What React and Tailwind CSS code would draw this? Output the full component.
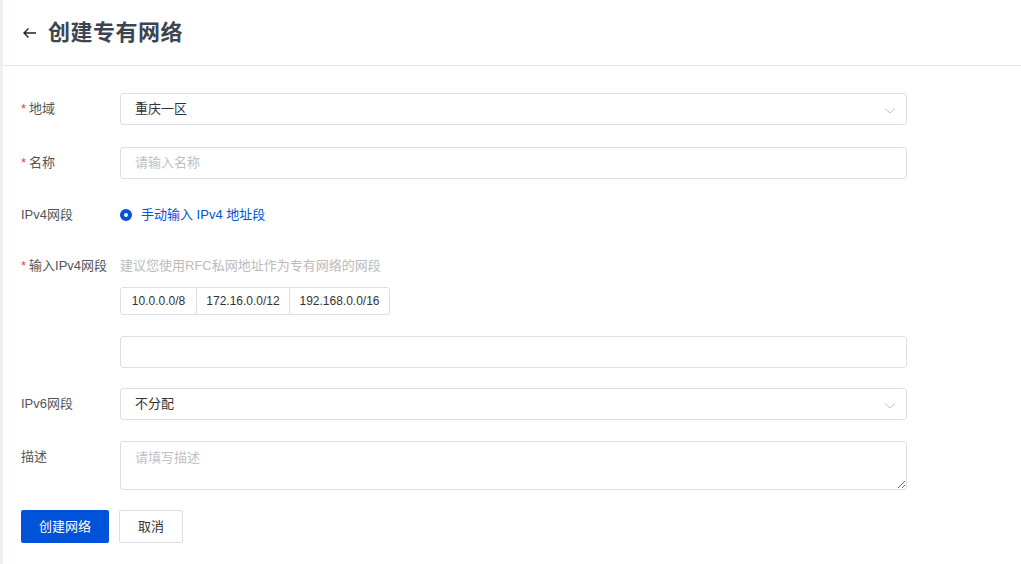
import React from 'react';

const font = { fontFamily: '"Liberation Sans", "Noto Sans CJK SC", sans-serif' };

function Label({ required, children }) {
  return (
    <div className="w-[99px] shrink-0 h-[32px] flex items-center text-[13px] text-[#555]">
      {required && <span className="text-[#e54545] mr-[3px]">*</span>}
      <span>{children}</span>
    </div>
  );
}

function Chevron() {
  return (
    <svg width="12" height="8" viewBox="0 0 12 8" className="absolute right-[10px] top-[13px]">
      <path d="M1 1.5 L6 6 L11 1.5" fill="none" stroke="#c0c4cc" strokeWidth="1" />
    </svg>
  );
}

export default function App() {
  return (
    <div className="flex w-[1021px] h-[564px] bg-white overflow-hidden" style={font}>
      <div className="w-[3px] shrink-0 bg-[#eef0f3]" />
      <div className="flex-1 flex flex-col">
        {/* Header */}
        <div className="h-[66px] shrink-0 border-b border-[#e6e6e6] flex items-center pl-[19px]">
          <svg width="16" height="14" viewBox="0 0 16 14" className="mr-[10px]">
            <path d="M2 7 H14 M6.5 2.5 L2 7 L6.5 11.5" fill="none" stroke="#222" strokeWidth="1.4" />
          </svg>
          <h1 className="text-[22px] font-bold text-[#3d4451] tracking-[0.5px]">创建专有网络</h1>
        </div>

        {/* Form */}
        <div className="pl-[18px] pt-[27px] flex flex-col">
          <div className="flex">
            <Label required>地域</Label>
            <div className="relative w-[787px] h-[32px] border border-[#dcdfe4] rounded-[3px] flex items-center pl-[14px] text-[13px] text-[#333]">
              重庆一区
              <Chevron />
            </div>
          </div>

          <div className="flex mt-[22px]">
            <Label required>名称</Label>
            <div className="w-[787px] h-[32px] border border-[#dcdfe4] rounded-[3px] flex items-center pl-[14px] text-[13px] text-[#bfbfbf]">
              请输入名称
            </div>
          </div>

          <div className="flex mt-[20px]">
            <Label>IPv4网段</Label>
            <div className="h-[32px] flex items-center">
              <span className="w-[12px] h-[12px] rounded-full border-[4px] border-[#0052d9] bg-white mr-[9px]" />
              <span className="text-[13px] text-[#0052d9]">手动输入 IPv4 地址段</span>
            </div>
          </div>

          <div className="flex mt-[19px]">
            <Label required>输入IPv4网段</Label>
            <div className="flex flex-col">
              <div className="h-[32px] flex items-center text-[13px] text-[#bbbbbb]">
                建议您使用RFC私网地址作为专有网络的网段
              </div>
              <div className="flex mt-[5px] h-[28px] w-fit border border-[#dcdfe4] rounded-[3px] text-[12px] text-[#333]">
                <div className="w-[76px] flex items-center justify-center border-r border-[#dcdfe4]">10.0.0.0/8</div>
                <div className="w-[93px] flex items-center justify-center border-r border-[#dcdfe4]">172.16.0.0/12</div>
                <div className="w-[99px] flex items-center justify-center">192.168.0.0/16</div>
              </div>
              <div className="mt-[21px] w-[787px] h-[32px] border border-[#dcdfe4] rounded-[3px]" />
            </div>
          </div>

          <div className="flex mt-[20px]">
            <Label>IPv6网段</Label>
            <div className="relative w-[787px] h-[32px] border border-[#dcdfe4] rounded-[3px] flex items-center pl-[14px] text-[13px] text-[#333]">
              不分配
              <Chevron />
            </div>
          </div>

          <div className="flex mt-[21px]">
            <Label>描述</Label>
            <textarea
              className="w-[787px] h-[49px] border border-[#dcdfe4] rounded-[3px] px-[14px] py-[6px] text-[13px] text-[#333] placeholder:text-[#bfbfbf] outline-none"
              placeholder="请填写描述"
              style={font}
            />
          </div>

          <div className="flex mt-[20px] gap-[10px]">
            <button className="w-[88px] h-[33px] bg-[#0052d9] text-white text-[13px] rounded-[2px]">创建网络</button>
            <button className="w-[64px] h-[33px] bg-white border border-[#dcdfe4] text-[#333] text-[13px] rounded-[2px]">取消</button>
          </div>
        </div>
      </div>
    </div>
  );
}
